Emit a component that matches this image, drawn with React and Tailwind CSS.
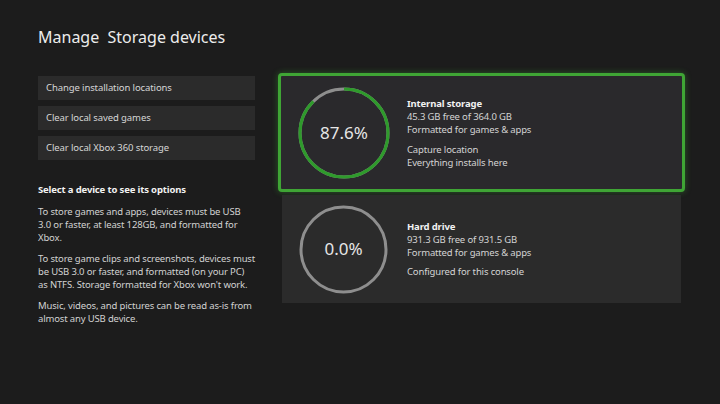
const FONT = { fontFamily: '"Noto Sans", "Open Sans", "DejaVu Sans", sans-serif' };

const actions = [
	'Change installation locations',
	'Clear local saved games',
	'Clear local Xbox 360 storage',
];

const Ring = ({ percent, size, used }) => {
	const r = size / 2 - 2;
	const c = 2 * Math.PI * r;
	const usedLen = (c * used) / 100;
	return (
		<div className="relative shrink-0" style={{ width: size, height: size }}>
			<svg width={size} height={size} className="-rotate-90">
				<circle cx={size / 2} cy={size / 2} r={r} fill="none" stroke="#8e8e8e" strokeWidth="3" />
				{used > 0 && (
					<circle
						cx={size / 2}
						cy={size / 2}
						r={r}
						fill="none"
						stroke="#2f9a2c"
						strokeWidth="3"
						strokeDasharray={`${usedLen} ${c}`}
					/>
				)}
			</svg>
			<div className="absolute inset-0 flex items-center justify-center text-[17px] text-[#e6e6e6]">
				{percent}
			</div>
		</div>
	);
};

export default function App() {
	return (
		<div className="w-[720px] h-[404px] bg-[#1c1c1c] overflow-hidden pl-[38px] pt-[25px]" style={FONT}>
			<h1 className="text-[16px] leading-[24px] text-[#ececec]">
				Manage&nbsp; Storage devices
			</h1>
			<div className="flex mt-[24px] gap-[23px]">
				<div className="w-[217px] pt-[3px]">
					<div className="flex flex-col gap-[6px]">
						{actions.map((a) => (
							<div
								key={a}
								className="h-[24px] bg-[#2b2b2b] flex items-center pl-[8px] pt-[1px] text-[9.5px] tracking-[-0.1px] text-[#d6d6d6]"
							>
								{a}
							</div>
						))}
					</div>
					<div className="mt-[23px] text-[9.5px] leading-[13px] tracking-[-0.15px] text-[#d2d2d2] whitespace-nowrap">
						<p className="font-bold text-[#f2f2f2]">Select a device to see its options</p>
						<p className="mt-[9px]">
							To store games and apps, devices must be USB
							<br />
							3.0 or faster, at least 128GB, and formatted for
							<br />
							Xbox.
						</p>
						<p className="mt-[8px]">
							To store game clips and screenshots, devices must
							<br />
							be USB 3.0 or faster, and formatted (on your PC)
							<br />
							as NTFS. Storage formatted for Xbox won't work.
						</p>
						<p className="mt-[8px]">
							Music, videos, and pictures can be read as-is from
							<br />
							almost any USB device.
						</p>
					</div>
				</div>
				<div className="w-[407px] flex flex-col gap-[3px]">
					<div className="h-[119px] rounded-[4px] border-[3px] border-[#3fa535] bg-[#2a292c] shadow-[0_0_6px_rgba(60,170,50,0.45)] flex items-center pl-[17px] gap-[17px]">
						<Ring percent="87.6%" size={92} used={87.6} />
						<div className="text-[9.5px] leading-[13px] tracking-[-0.15px] text-[#d4d4d4] pt-[1px]">
							<p className="font-bold text-[#f2f2f2]">Internal storage</p>
							<p>45.3 GB free of 364.0 GB</p>
							<p>Formatted for games &amp; apps</p>
							<p className="mt-[7px]">Capture location</p>
							<p>Everything installs here</p>
						</div>
					</div>
					<div className="mx-[4px] h-[108px] bg-[#2b2b2b] flex items-center pl-[17px] gap-[19px]">
						<Ring percent="0.0%" size={89} used={0} />
						<div className="text-[9.5px] leading-[13px] tracking-[-0.15px] text-[#d4d4d4]">
							<p className="font-bold text-[#f2f2f2]">Hard drive</p>
							<p>931.3 GB free of 931.5 GB</p>
							<p>Formatted for games &amp; apps</p>
							<p className="mt-[6px]">Configured for this console</p>
						</div>
					</div>
				</div>
			</div>
		</div>
	);
}
